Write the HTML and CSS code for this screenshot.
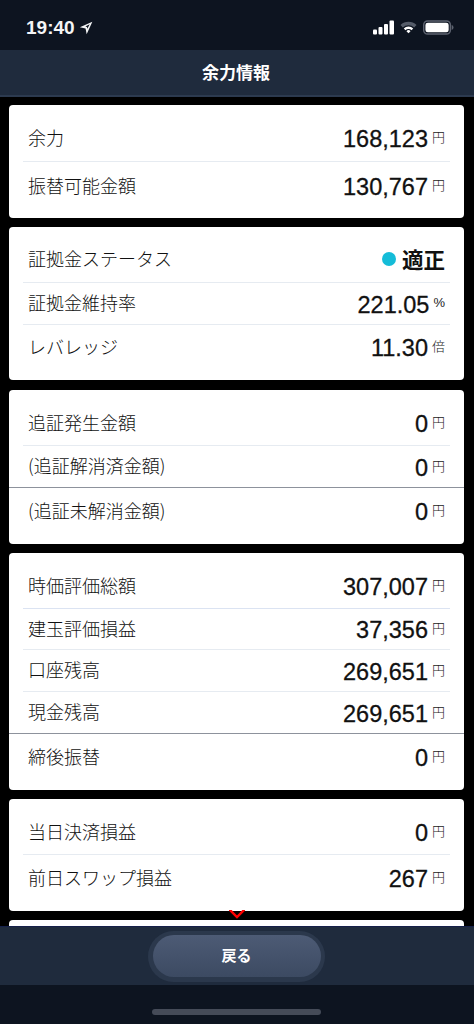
FILE: index.html
```html
<!DOCTYPE html>
<html lang="ja">
<head>
<meta charset="utf-8">
<title>余力情報</title>
<link rel="stylesheet" href="styles.css">
</head>
<body>
<div class="app">
  <div class="status">
    <div class="status-left">
      <span class="time">19:40</span>
      <svg class="loc" viewBox="0 0 13 13" width="14" height="14"><path d="M12.4 0.6 L0.8 5.9 L6.1 6.9 L7.1 12.2 Z M9.9 3.1 L5.9 5.2 L7.4 5.6 L7.8 7.1 Z" fill="#f4f5f6" fill-rule="evenodd"/></svg>
    </div>
    <div class="status-right">
      <svg viewBox="0 0 21 15" width="21" height="15"><g fill="#fff"><rect x="0" y="9.5" width="4" height="5" rx="1"/><rect x="5.5" y="7" width="4" height="7.5" rx="1"/><rect x="11" y="4" width="4" height="10.5" rx="1"/><rect x="16.5" y="0.5" width="4.5" height="14" rx="1"/></g></svg>
      <svg viewBox="0 0 18 14" width="17" height="14"><path d="M0.5 5 A12 12 0 0 1 17.5 5 L15 7.6 A8.6 8.6 0 0 0 3 7.6 Z" fill="#555c69"/><path d="M4 8.6 A7 7 0 0 1 14 8.6 L12.2 10.4 A4.5 4.5 0 0 0 5.8 10.4 Z" fill="#fff"/><path d="M6.8 11.4 A3 3 0 0 1 11.2 11.4 L9 13.7 Z" fill="#fff"/></svg>
      <svg viewBox="0 0 32 15" width="31" height="15"><rect x="0.75" y="0.75" width="27.5" height="13.5" rx="4" fill="none" stroke="#5d6370" stroke-width="1.5"/><rect x="2.5" y="2.5" width="24" height="10" rx="2.5" fill="#fff"/><path d="M29.6 5 A2.6 2.6 0 0 1 29.6 10 Z" fill="#5d6370"/></svg>
    </div>
  </div>
  <header class="nav">余力情報</header>
  <main class="content">
    <section class="card pad-10">
      <div class="row r46"><span class="label">余力</span><span class="value"><b>168,123</b><i>円</i></span></div>
      <div class="row r48 last"><span class="label">振替可能金額</span><span class="value"><b>130,767</b><i>円</i></span></div>
    </section>
    <section class="card pad-9">
      <div class="row r46"><span class="label">証拠金ステータス</span><span class="value status-value"><em class="dot"></em><strong>適正</strong></span></div>
      <div class="row r41"><span class="label">証拠金維持率</span><span class="value"><b>221.05</b><i class="pct">%</i></span></div>
      <div class="row r44 last"><span class="label">レバレッジ</span><span class="value"><b>11.30</b><i>倍</i></span></div>
    </section>
    <section class="card pad-11">
      <div class="row r44"><span class="label">追証発生金額</span><span class="value"><b>0</b><i>円</i></span></div>
      <div class="row r41 dark"><span class="label">(追証解消済金額)</span><span class="value"><b>0</b><i>円</i></span></div>
      <div class="row r46 last"><span class="label">(追証未解消金額)</span><span class="value"><b>0</b><i>円</i></span></div>
    </section>
    <section class="card pad-11">
      <div class="row r44 blue"><span class="label">時価評価総額</span><span class="value"><b>307,007</b><i>円</i></span></div>
      <div class="row r40"><span class="label">建玉評価損益</span><span class="value"><b>37,356</b><i>円</i></span></div>
      <div class="row r41"><span class="label">口座残高</span><span class="value"><b>269,651</b><i>円</i></span></div>
      <div class="row r41 dark"><span class="label">現金残高</span><span class="value"><b>269,651</b><i>円</i></span></div>
      <div class="row r46 last"><span class="label">締後振替</span><span class="value"><b>0</b><i>円</i></span></div>
    </section>
    <section class="card pad-11">
      <div class="row r44"><span class="label">当日決済損益</span><span class="value"><b>0</b><i>円</i></span></div>
      <div class="row r46 last"><span class="label">前日スワップ損益</span><span class="value"><b>267</b><i>円</i></span></div>
    </section>
    <section class="card peek"></section>
    <svg class="chevron" viewBox="0 0 16 9" width="16" height="9"><path d="M0.5 -0.5 L8 7 L15.5 -0.5" fill="none" stroke="#f00" stroke-width="2.4"/></svg>
  </main>
  <footer class="actions">
    <div class="btn-ring"><button class="btn">戻る</button></div>
  </footer>
  <div class="home"><span class="home-bar"></span></div>
</div>
</body>
</html>
```

FILE: styles.css
```css
* { box-sizing: border-box; }
html, body { margin: 0; padding: 0; background: #000; }
.app {
  width: 474px;
  height: 1024px;
  display: flex;
  flex-direction: column;
  overflow: hidden;
  font-family: "Noto Sans CJK JP", "Liberation Sans", sans-serif;
  color: #222;
}
.status {
  height: 50px;
  flex: none;
  background: #0d1420;
  display: flex;
  justify-content: space-between;
  align-items: center;
  padding: 6px 20px 0 26px;
  color: #f4f5f6;
}
.status-left { display: flex; align-items: center; gap: 4px; }
.time {
  font-family: "Liberation Sans", sans-serif;
  font-size: 19px;
  font-weight: 700;
}
.status-right { display: flex; align-items: center; gap: 6px; padding-bottom: 2px; }
.status-right svg { display: block; }
.nav {
  height: 47px;
  flex: none;
  background: #1f2b3d;
  border-bottom: 2px solid #2c3a4f;
  color: #fff;
  font-size: 17px;
  font-weight: 700;
  display: flex;
  align-items: center;
  justify-content: center;
  padding: 0 2px 2px 0;
}
.content {
  flex: 1;
  min-height: 0;
  position: relative;
  overflow: hidden;
  padding-top: 8px;
  background: #000;
}
.card {
  margin: 0 10px 9px 9px;
  padding: 0 14px;
  background: #fff;
  border-radius: 4px;
}
.card.pad-9 { margin-bottom: 10px; }
.pad-9 { padding-top: 9px; padding-bottom: 11px; }
.pad-10 { padding-top: 10px; padding-bottom: 8px; }
.pad-11 { padding-top: 11px; padding-bottom: 10px; }
.row {
  display: flex;
  justify-content: space-between;
  align-items: center;
  padding: 0 5px;
  border-bottom: 1px solid #e6ebf1;
  position: relative;
}
.row.last { border-bottom: 0; }
.row.blue { border-bottom-color: #dbe3f2; }
.row.dark::after {
  content: "";
  position: absolute;
  left: -14px;
  right: -14px;
  bottom: -1px;
  height: 1px;
  background: #8d929c;
}
.r40 { height: 41px; }
.r41 { height: 42px; }
.r44 { height: 45px; }
.r46 { height: 47px; }
.r46.last { height: 46px; }
.r44.last { height: 44px; }
.r48 { height: 48px; }
.label {
  font-size: 18px;
  font-weight: 300;
  color: #111;
  line-height: 24px;
  margin-bottom: 3px;
}
.value {
  display: flex;
  align-items: center;
  font-family: "Liberation Sans", "Noto Sans CJK JP", sans-serif;
}
.value b {
  font-size: 23.5px;
  font-weight: 400;
  color: #111;
  line-height: 28px;
  padding-top: 2px;
  -webkit-text-stroke: 0.3px #111;
}
.value i {
  font-family: "Noto Sans CJK JP", sans-serif;
  font-style: normal;
  font-size: 13px;
  font-weight: 300;
  color: #222;
  margin-left: 4px;
  line-height: 16px;
  position: relative;
  top: -1px;
}
.value i.pct {
  font-family: "Liberation Sans", sans-serif;
  font-size: 13px;
}
.status-value { gap: 6px; }
.dot {
  width: 14px;
  height: 14px;
  border-radius: 50%;
  background: #14bcd8;
  display: block;
}
.status-value strong {
  font-family: "Noto Sans CJK JP", sans-serif;
  font-size: 21.5px;
  font-weight: 700;
  color: #111;
  line-height: 28px;
}
.peek { height: 60px; margin-bottom: 0; }
.chevron {
  position: absolute;
  left: 229px;
  top: 813px;
  display: block;
}
.actions {
  height: 59px;
  flex: none;
  background: #1f2b3d;
  border-top: 1px solid #15204a;
  display: flex;
  justify-content: center;
  align-items: center;
  padding-right: 1px;
}
.btn-ring {
  width: 177px;
  height: 51px;
  border-radius: 26px;
  background: #2b384c;
  display: flex;
  align-items: center;
  justify-content: center;
}
.btn {
  width: 168px;
  height: 42px;
  border: 0;
  border-radius: 21px;
  background: linear-gradient(#4d5b75, #3c4a62);
  color: #fff;
  font-family: "Noto Sans CJK JP", sans-serif;
  font-size: 15px;
  font-weight: 700;
  padding: 0 0 3px;
}
.home {
  height: 39px;
  flex: none;
  background: #0d1420;
  display: flex;
  justify-content: center;
  padding: 24px 1px 0 0;
}
.home-bar {
  width: 169px;
  height: 6px;
  border-radius: 3px;
  background: #454b58;
  display: block;
}
```
